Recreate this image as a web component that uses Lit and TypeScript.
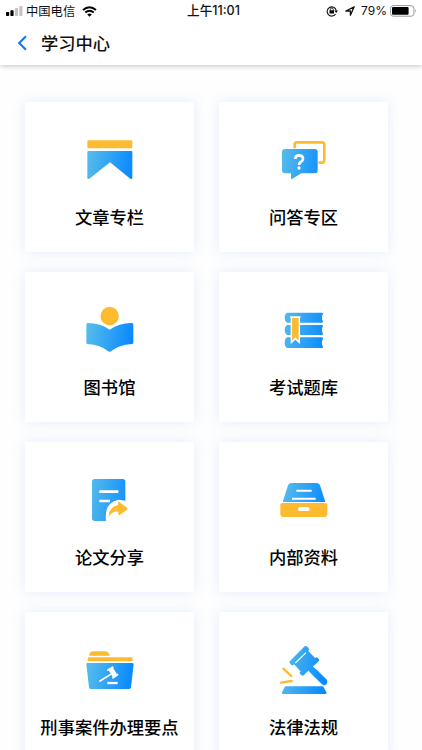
import { LitElement, html, svg, css } from "lit";
import { customElement, property } from "lit/decorators.js";

const A = "#fdbb30";
const B = "url(#g)";

// Icon artwork, drawn on a 240 x 180 grid.
const icons: Record<string, unknown> = {
  column: svg`
    <rect x="51" y="31" width="135" height="24" rx="4" fill=${A} />
    <path fill=${B} d="M54 63H183Q186 63 186 66V143Q186 149 180 146L119 97L57 146Q51 149 51 143V66Q51 63 54 63Z" />`,
  qa: svg`
    <path d="M91 55V44Q91 37 98 37H173Q180 37 180 44V91Q180 98 173 98H162" fill="none" stroke=${A} stroke-width="8" />
    <path fill=${B} d="M62 57H151Q160 57 160 66V121Q160 130 151 130H111L84 146Q80 149 80 143V130H62Q53 130 53 121V66Q53 57 62 57Z" />
    <path d="M93 87Q93 76 104 76Q116 76 116 86Q116 92 109 96Q104 99 104 105" fill="none" stroke="#fff" stroke-width="8" />
    <circle cx="104" cy="114" r="5" fill="#fff" />`,
  library: svg`
    <circle cx="118" cy="48" r="27.5" fill=${A} />
    <path fill=${B} d="M52 69Q91 70 118 89Q145 70 184 69Q189 69 189 74V128Q189 132 184 132Q146 134 122 154Q118 157 114 154Q90 134 52 132Q48 132 48 128V74Q48 69 52 69Z" />`,
  exam: svg`
    <path fill=${B} d="M69 38H172Q177 38 176 42Q169 53 176 64Q177 68 172 68H69Q61 65 61 53Q61 41 69 38Z" />
    <path fill=${B} d="M69 75H172Q177 75 176 79Q169 90 176 101Q177 105 172 105H69Q61 102 61 90Q61 78 69 75Z" />
    <path fill=${B} d="M69 112H172Q177 112 176 116Q169 127 176 140Q177 144 172 144H69Q61 141 61 128Q61 115 69 112Z" />
    <path d="M79 50H107V132L93 119L79 132Z" fill="#fff" />
    <path d="M83 57Q83 53 87 53H99Q103 53 103 57V122L93 112L83 122Z" fill=${A} />
    <path d="M77 51H109" stroke="#fff" stroke-width="4" />`,
  share: svg`
    <path fill=${B} d="M73 27H157Q165 27 165 35V95L110 153H73Q65 153 65 145V35Q65 27 73 27Z" />
    <path d="M87 65H144M87 93H119" stroke="#fff" stroke-width="8" />
    <path d="M107 154Q103 117 119 102Q130 91 144 89L166 92V154Z" fill="#fff" />
    <path d="M143 97Q144 94 147 96L170 113Q173 116 170 119L148 135Q144 137 144 133V125Q126 123 116 139Q114 132 118 124Q126 108 143 105Z" fill=${A} />`,
  files: svg`
    <path fill=${B} d="M82 39H155Q165 39 168 49L183 96H55L70 49Q73 39 82 39Z" />
    <path d="M96 62H142M83 86H154" stroke="#fff" stroke-width="6" />
    <path d="M55 99H182Q189 99 189 106V131Q189 141 179 141H58Q48 141 48 131V106Q48 99 55 99Z" fill=${A} />
    <rect x="101" y="111" width="35" height="12" rx="6" fill="#fff" />`,
  criminal: svg`
    <path d="M57 47V41Q60 34 68 34H106Q112 34 115 40L119 47Z" fill=${A} />
    <rect x="52" y="52" width="135" height="12" rx="4" fill=${A} />
    <path fill=${B} d="M51 69H186Q190 69 190 73L182 142Q181 147 177 147H60Q56 147 56 142L48 73Q48 69 51 69Z" />
    <path d="M89 123L121 103" stroke="#fff" stroke-width="5" stroke-linecap="round" />
    <path d="M115 91L128 83L140 103L127 111Z" fill="#fff" />
    <path d="M113 90L127 82M128 113L141 104" stroke="#fff" stroke-width="6" stroke-linecap="round" />
    <path d="M111 129H142" stroke="#fff" stroke-width="7" />`,
  law: svg`
    <path fill=${B} d="M116 75L127 64Q160 90 186 118Q192 126 186 133Q180 139 173 133Q145 107 116 75Z" />
    <path fill=${B} d="M80 62L121 22L158 60L115 101Z" />
    <path fill=${B} d="M121 19Q125 16 129 20L133 25Q136 28 132 32L87 75Q83 78 80 74L76 69Q74 66 77 63Z" />
    <path fill=${B} d="M153 53Q156 50 160 53L164 58Q166 61 163 64L118 106Q114 109 111 105L107 101Q104 98 108 95Z" />
    <path d="M93 69L125 38" stroke="#fff" stroke-width="3.2" />
    <path d="M57 86L81 108M50 128L82 123" stroke=${A} stroke-width="7" stroke-linecap="round" />
    <path fill=${B} d="M65 139H173Q177 139 179 143L186 157Q188 162 183 162H56Q51 162 53 157L60 143Q62 139 65 139Z" />`,
};

@customElement("study-card")
export class StudyCard extends LitElement {
  @property() icon = "";
  @property() label = "";

  static styles = css`
    :host {
      display: flex;
      flex-direction: column;
      align-items: center;
      height: 150px;
      box-sizing: border-box;
      padding-top: 28px;
      background: #fff;
      border-radius: 2px;
      box-shadow: 0 0 14px rgba(90, 150, 225, 0.17);
    }
    .icon {
      width: 80px;
      height: 60px;
      flex: none;
    }
    .label {
      margin-top: 14px;
      font-size: 17.3px;
      line-height: 26px;
      font-weight: 500;
      white-space: nowrap;
      color: #000;
    }
  `;

  render() {
    return html`
      <svg class="icon" viewBox="-1 0 240 180">
        <defs>
          <linearGradient id="g" gradientUnits="userSpaceOnUse" x1="48" y1="80" x2="188" y2="105">
            <stop offset="0" stop-color="#58bdea" />
            <stop offset="1" stop-color="#0889ff" />
          </linearGradient>
        </defs>
        ${icons[this.icon]}
      </svg>
      <div class="label">${this.label}</div>
    `;
  }
}

@customElement("status-bar")
export class StatusBar extends LitElement {
  static styles = css`
    :host {
      display: grid;
      grid-template-columns: 1fr auto 1fr;
      align-items: center;
      height: 22px;
      padding: 0 5px 0 6px;
      font-size: 12.3px;
      line-height: 22px;
      color: #111;
    }
    .side {
      display: flex;
      align-items: center;
    }
    .right {
      justify-content: flex-end;
    }
    .signal { width: 17px; height: 10px; margin-right: 3px; }
    .wifi { width: 15px; height: 11px; margin-left: 7px; }
    .time {
      padding-left: 4px;
      font-family: Inter, "Noto Sans CJK SC", sans-serif;
      font-weight: 500;
      font-size: 12.6px;
      white-space: nowrap;
    }
    .lock { width: 12px; height: 12px; margin-right: 7px; }
    .arrow { width: 10px; height: 10px; margin-right: 6px; }
    .pct { margin-right: 3px; font-family: Inter, "Liberation Sans", sans-serif; font-size: 12px; }
    .battery { width: 27px; height: 12px; }
  `;

  render() {
    return html`
      <div class="side">
        <svg class="signal" viewBox="0 0 17 10">
          <rect x="0" y="6" width="3.2" height="4" rx=".7" />
          <rect x="4.4" y="4.2" width="3.2" height="5.8" rx=".7" />
          <rect x="8.9" y="2" width="3.2" height="8" rx=".7" fill="#c4c4c4" />
          <rect x="13.3" y="0" width="3.2" height="10" rx=".7" fill="#c4c4c4" />
        </svg>
        <span>中国电信</span>
        <svg class="wifi" viewBox="0 0 15 11">
          <path d="M1 4Q7.5 -1.7 14 4M3.3 6.5Q7.5 2.8 11.7 6.5" fill="none" stroke="#000" stroke-width="1.9" />
          <path d="M5.2 8.4Q7.5 6.5 9.8 8.4L7.5 10.8Z" />
        </svg>
      </div>
      <div class="time">上午11:01</div>
      <div class="side right">
        <svg class="lock" viewBox="0 0 12 12">
          <path d="M9.6 9A4.6 4.6 0 1 1 10.2 5.3" fill="none" stroke="#111" stroke-width="1.1" />
          <path d="M8.4 5.4H12L10.2 8Z" />
          <rect x="3.5" y="5.2" width="4.6" height="3.4" rx=".4" />
          <path d="M4.4 5.4V4.4Q4.4 3 5.8 3T7.2 4.4V5.4" fill="none" stroke="#111" stroke-width=".9" />
        </svg>
        <svg class="arrow" viewBox="0 0 10 10">
          <path d="M.8 5L9.2 .8L5.4 9.2V5Z" fill="none" stroke="#111" stroke-width="1.3" stroke-linejoin="round" />
        </svg>
        <span class="pct">79%</span>
        <svg class="battery" viewBox="0 0 27 12">
          <rect x=".6" y=".6" width="23.3" height="10.6" rx="2.6" fill="#fff" stroke="#999" stroke-width="1" />
          <rect x="2" y="2" width="16.6" height="7.8" rx="1" />
          <path d="M25 4Q26.8 6 25 8Z" fill="#999" />
        </svg>
      </div>
    `;
  }
}

@customElement("app-root")
export class AppRoot extends LitElement {
  static styles = css`
    :host {
      display: block;
      height: 750px;
      overflow: hidden;
      background: #fefefe;
      font-family: "Noto Sans CJK SC", sans-serif;
    }
    .top {
      height: 65px;
      background: #fff;
      box-shadow: 0 1px 5px rgba(0, 0, 0, 0.24);
    }
    .nav {
      display: flex;
      align-items: center;
      height: 41px;
      padding-left: 17px;
    }
    .back {
      width: 11px;
      height: 16px;
      margin-right: 13px;
    }
    .title {
      font-size: 17.3px;
      line-height: 26px;
      color: #111;
      font-weight: 500;
    }
    .grid {
      display: grid;
      grid-template-columns: 169px 169px;
      gap: 20px 25px;
      padding: 37px 0 0 25px;
    }
  `;

  private cards = [
    ["column", "文章专栏"],
    ["qa", "问答专区"],
    ["library", "图书馆"],
    ["exam", "考试题库"],
    ["share", "论文分享"],
    ["files", "内部资料"],
    ["criminal", "刑事案件办理要点"],
    ["law", "法律法规"],
  ];

  render() {
    return html`
      <div class="top">
        <status-bar></status-bar>
        <div class="nav">
          <svg class="back" viewBox="0 0 11 16">
            <path d="M9 1.2L2.2 8L9 14.8" fill="none" stroke="#1479e6" stroke-width="2.1" />
          </svg>
          <div class="title">学习中心</div>
        </div>
      </div>
      <div class="grid">
        ${this.cards.map(([icon, label]) => html`<study-card .icon=${icon} .label=${label}></study-card>`)}
      </div>
    `;
  }
}
